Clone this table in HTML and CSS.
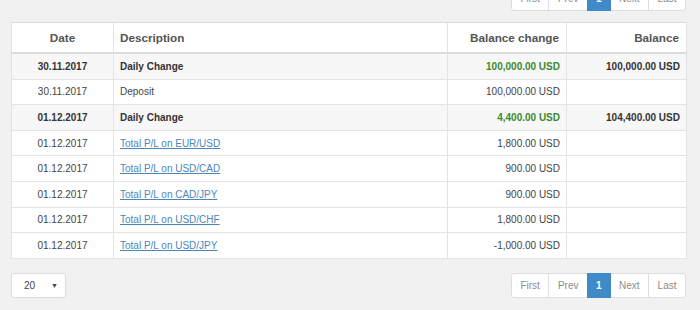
FILE: index.html
```html
<!DOCTYPE html>
<html>
<head>
<meta charset="utf-8">
<link rel="stylesheet" href="styles.css">
</head>
<body>
<div class="page">
  <div class="pager-row top">
    <ul class="pager">
      <li>First</li><li>Prev</li><li class="active">1</li><li>Next</li><li>Last</li>
    </ul>
  </div>
  <table class="ledger">
    <thead>
      <tr><th class="c-date">Date</th><th class="c-desc">Description</th><th class="c-num">Balance change</th><th class="c-num">Balance</th></tr>
    </thead>
    <tbody>
      <tr class="total"><td class="c-date">30.11.2017</td><td class="c-desc">Daily Change</td><td class="c-num pos">100,000.00 USD</td><td class="c-num">100,000.00 USD</td></tr>
      <tr><td class="c-date">30.11.2017</td><td class="c-desc">Deposit</td><td class="c-num">100,000.00 USD</td><td class="c-num"></td></tr>
      <tr class="total"><td class="c-date">01.12.2017</td><td class="c-desc">Daily Change</td><td class="c-num pos">4,400.00 USD</td><td class="c-num">104,400.00 USD</td></tr>
      <tr><td class="c-date">01.12.2017</td><td class="c-desc"><a href="#">Total P/L on EUR/USD</a></td><td class="c-num">1,800.00 USD</td><td class="c-num"></td></tr>
      <tr><td class="c-date">01.12.2017</td><td class="c-desc"><a href="#">Total P/L on USD/CAD</a></td><td class="c-num">900.00 USD</td><td class="c-num"></td></tr>
      <tr><td class="c-date">01.12.2017</td><td class="c-desc"><a href="#">Total P/L on CAD/JPY</a></td><td class="c-num">900.00 USD</td><td class="c-num"></td></tr>
      <tr><td class="c-date">01.12.2017</td><td class="c-desc"><a href="#">Total P/L on USD/CHF</a></td><td class="c-num">1,800.00 USD</td><td class="c-num"></td></tr>
      <tr><td class="c-date">01.12.2017</td><td class="c-desc"><a href="#">Total P/L on USD/JPY</a></td><td class="c-num">-1,000.00 USD</td><td class="c-num"></td></tr>
    </tbody>
  </table>
  <div class="controls">
    <div class="select"><span>20</span><span class="arrow">▼</span></div>
    <ul class="pager">
      <li>First</li><li>Prev</li><li class="active">1</li><li>Next</li><li>Last</li>
    </ul>
  </div>
</div>
</body>
</html>
```

FILE: styles.css
```css
html, body {
  margin: 0;
  padding: 0;
  background: #f1f1f1;
  font-family: "Liberation Sans", Arial, sans-serif;
  color: #333;
}
.page {
  width: 676px;
  margin-left: 11px;
  margin-top: -14px;
}
.pager-row {
  display: flex;
  justify-content: flex-end;
  margin-right: 1px;
}
.pager {
  display: flex;
  margin: 0;
  padding: 0;
  list-style: none;
}
.pager li {
  height: 23px;
  line-height: 23px;
  padding: 0 8.5px;
  background: #fff;
  border: 1px solid #dedede;
  margin-left: -1px;
  font-size: 10px;
  color: #8c8c8c;
}
.pager li:first-child {
  border-radius: 3px 0 0 3px;
  margin-left: 0;
}
.pager li:last-child {
  border-radius: 0 3px 3px 0;
}
.pager li.active {
  background: #3f8bc9;
  border-color: #3f8bc9;
  color: #fff;
  font-weight: bold;
  padding: 0 8px;
  position: relative;
}
.ledger {
  margin-top: 11px;
  width: 676px;
  border-collapse: collapse;
  background: #fff;
  border: 1px solid #dcdcdc;
  table-layout: fixed;
}
.ledger th, .ledger td {
  border: 1px solid #e3e3e3;
  padding: 0 7px;
  white-space: nowrap;
}
.ledger th {
  height: 29px;
  font-size: 11.7px;
  font-weight: bold;
  color: #555;
  border-bottom: 2px solid #dcdcdc;
  border-top-color: #dcdcdc;
}
.ledger td {
  height: 24.6px;
  font-size: 10px;
  color: #444;
}
.ledger th:nth-child(1) { width: 87px; }
.ledger th:nth-child(2) { width: 320px; }
.ledger th:nth-child(3) { width: 104px; }
.c-date { text-align: center; }
.ledger th.c-desc, .ledger td.c-desc { text-align: left; padding-left: 6px; }
.c-num { text-align: right; }
.ledger td.c-num { padding-right: 6px; }
.ledger tr.total td {
  background: #f7f7f7;
  font-weight: bold;
  color: #333;
}
.ledger tr.total td.pos { color: #3a8a2e; }
.ledger a {
  color: #4c86b8;
  text-decoration: underline;
}
.controls {
  display: flex;
  justify-content: space-between;
  align-items: center;
  margin-top: 14px;
  margin-right: 1px;
}
.select {
  height: 23px;
  background: #fff;
  border: 1px solid #dcdcdc;
  border-radius: 3px;
  display: flex;
  align-items: center;
  justify-content: space-between;
  padding: 0 7px 0 12px;
  width: 34px;
  font-size: 10px;
  color: #444;
}
.select .arrow {
  font-size: 7px;
  color: #444;
}
```
